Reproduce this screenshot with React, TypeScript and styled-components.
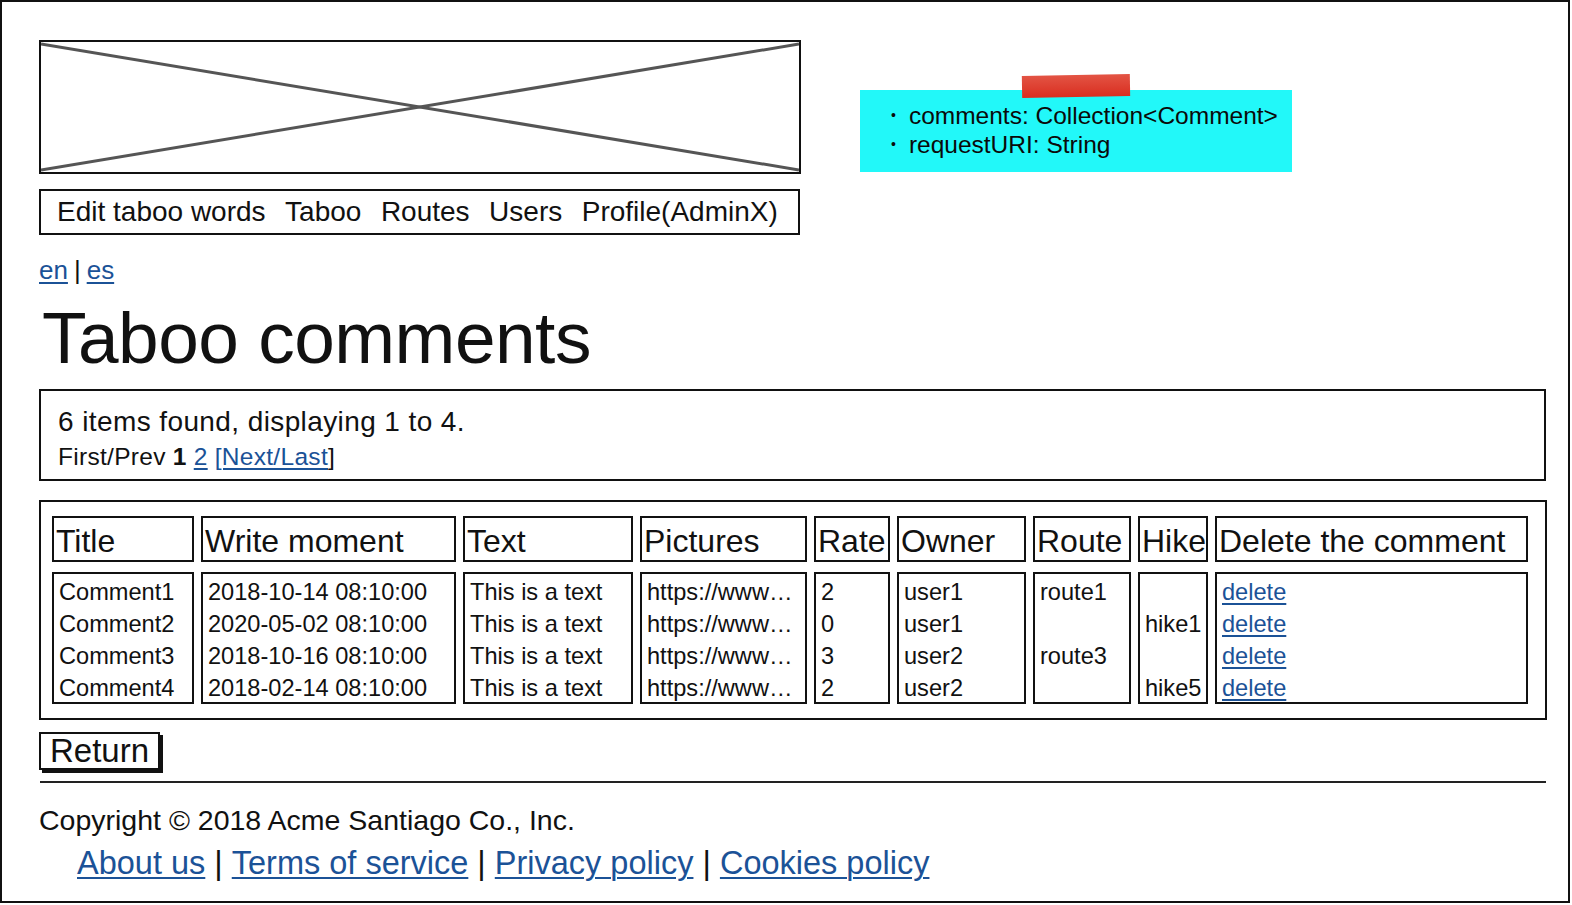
import React from 'react';
import styled, { createGlobalStyle } from 'styled-components';

const GlobalStyle = createGlobalStyle`
  html, body {
    margin: 0;
    padding: 0;
    background: #ffffff;
  }
  body {
    font-family: 'Liberation Sans', Arial, sans-serif;
    color: #111;
  }
`;

const LINK = '#1b5297';

const Frame = styled.div`
  box-sizing: border-box;
  width: 1570px;
  height: 903px;
  border: 2px solid #111;
  padding: 38px 0 0 37px;
  overflow: hidden;
`;

const TopRow = styled.div`
  display: flex;
  align-items: flex-start;
  gap: 59px;
`;

const Placeholder = styled.div`
  box-sizing: border-box;
  width: 762px;
  height: 134px;
  border: 2px solid #111;
  svg {
    display: block;
    width: 100%;
    height: 100%;
  }
`;

const Note = styled.div`
  position: relative;
  margin-top: 50px;
  width: 432px;
  height: 82px;
  background: #22f8f9;
  box-sizing: border-box;
  padding: 11px 0 0 31px;
  font-family: 'Liberation Sans', Arial, sans-serif;
  font-size: 24.5px;
  line-height: 29px;
  color: #0a0a0a;
`;

const Tape = styled.div`
  position: absolute;
  left: 162px;
  top: -15px;
  width: 108px;
  height: 22px;
  background: linear-gradient(#e35444, #d92e20);
  transform: rotate(-1deg);
`;

const NoteItem = styled.div`
  display: flex;
  gap: 13px;
  &::before {
    content: '•';
    font-size: 14px;
  }
`;

const NavBox = styled.nav`
  box-sizing: border-box;
  margin-top: 15px;
  width: 761px;
  height: 46px;
  border: 2px solid #111;
  display: flex;
  align-items: center;
  gap: 19.5px;
  padding-left: 16px;
  font-size: 28px;
`;

const Lang = styled.div`
  margin-top: 20px;
  font-size: 26px;
  display: flex;
  align-items: center;
  gap: 6px;
  height: 30px;
`;

const Link = styled.a`
  color: ${LINK};
  text-decoration: underline;
  text-decoration-thickness: 2px;
  text-underline-offset: 3px;
`;

const Title = styled.h1`
  margin: 12px 0 0 3px;
  font-size: 73px;
  font-weight: 400;
  line-height: 82px;
  letter-spacing: -0.5px;
`;

const InfoBox = styled.div`
  box-sizing: border-box;
  margin-top: 10px;
  width: 1507px;
  height: 92px;
  border: 2px solid #111;
  padding: 14px 0 0 17px;
`;

const Found = styled.div`
  font-size: 28px;
  line-height: 34px;
  letter-spacing: 0.4px;
`;

const Pager = styled.div`
  margin-top: 2px;
  font-size: 24.5px;
  line-height: 32px;
  display: flex;
  gap: 7px;
  letter-spacing: 0.3px;
  b {
    font-weight: 700;
  }
`;

const TableBox = styled.div`
  box-sizing: border-box;
  margin-top: 19px;
  width: 1508px;
  height: 220px;
  border: 2px solid #111;
  padding: 14px 0 0 11px;
  display: flex;
  gap: 7px;
`;

const Column = styled.div<{ w: number }>`
  width: ${({ w }) => w}px;
  display: flex;
  flex-direction: column;
  gap: 10px;
`;

const HeadCell = styled.div`
  box-sizing: border-box;
  height: 46px;
  border: 2px solid #111;
  padding: 0 2px;
  font-size: 32px;
  line-height: 46px;
  white-space: nowrap;
`;

const BodyCell = styled.div`
  box-sizing: border-box;
  height: 132px;
  border: 2px solid #111;
  padding: 2px 0 0 5px;
  font-size: 23.6px;
  line-height: 32px;
  white-space: nowrap;
  overflow: hidden;
`;

const Line = styled.div`
  height: 32px;
`;

const ReturnButton = styled.button`
  margin-top: 12px;
  box-sizing: border-box;
  height: 38px;
  padding: 0 9px;
  background: #fff;
  border: 2px solid #111;
  box-shadow: 3px 3px 0 #111;
  font-family: 'Liberation Sans', Arial, sans-serif;
  font-size: 33px;
  line-height: 32px;
  color: #111;
  display: block;
`;

const Rule = styled.hr`
  margin: 11px 0 0 1px;
  width: 1506px;
  border: none;
  border-top: 2px solid #222;
`;

const Copyright = styled.div`
  margin-top: 20px;
  font-size: 28.5px;
  line-height: 34px;
`;

const FooterLinks = styled.div`
  margin: 6px 0 0 38px;
  display: flex;
  gap: 9px;
  font-size: 32.5px;
  line-height: 40px;
`;

type Col = { title: string; w: number; rows: (string | null)[]; link?: boolean };

const columns: Col[] = [
  { title: 'Title', w: 142, rows: ['Comment1', 'Comment2', 'Comment3', 'Comment4'] },
  {
    title: 'Write moment',
    w: 255,
    rows: ['2018-10-14 08:10:00', '2020-05-02 08:10:00', '2018-10-16 08:10:00', '2018-02-14 08:10:00'],
  },
  { title: 'Text', w: 170, rows: ['This is a text', 'This is a text', 'This is a text', 'This is a text'] },
  { title: 'Pictures', w: 167, rows: ['https://www…', 'https://www…', 'https://www…', 'https://www…'] },
  { title: 'Rate', w: 76, rows: ['2', '0', '3', '2'] },
  { title: 'Owner', w: 129, rows: ['user1', 'user1', 'user2', 'user2'] },
  { title: 'Route', w: 98, rows: ['route1', null, 'route3', null] },
  { title: 'Hike', w: 70, rows: [null, 'hike1', null, 'hike5'] },
  { title: 'Delete the comment', w: 313, rows: ['delete', 'delete', 'delete', 'delete'], link: true },
];

export default function App() {
  return (
    <>
      <GlobalStyle />
      <Frame>
        <TopRow>
          <Placeholder>
            <svg viewBox="0 0 758 130" preserveAspectRatio="none">
              <line x1="0" y1="2" x2="758" y2="128" stroke="#555" strokeWidth="3" />
              <line x1="0" y1="128" x2="758" y2="2" stroke="#555" strokeWidth="3" />
            </svg>
          </Placeholder>
          <Note>
            <Tape />
            <NoteItem>comments: Collection&lt;Comment&gt;</NoteItem>
            <NoteItem>requestURI: String</NoteItem>
          </Note>
        </TopRow>

        <NavBox>
          <span>Edit taboo words</span>
          <span>Taboo</span>
          <span>Routes</span>
          <span>Users</span>
          <span>Profile(AdminX)</span>
        </NavBox>

        <Lang>
          <Link href="#">en</Link>
          <span>|</span>
          <Link href="#">es</Link>
        </Lang>

        <Title>Taboo comments</Title>

        <InfoBox>
          <Found>6 items found, displaying 1 to 4.</Found>
          <Pager>
            <span>First/Prev</span>
            <b>1</b>
            <Link href="#">2</Link>
            <span>
              <Link href="#">[Next/Last</Link>]
            </span>
          </Pager>
        </InfoBox>

        <TableBox>
          {columns.map((col) => (
            <Column key={col.title} w={col.w}>
              <HeadCell>{col.title}</HeadCell>
              <BodyCell>
                {col.rows.map((r, i) => (
                  <Line key={i}>{r && (col.link ? <Link href="#">{r}</Link> : r)}</Line>
                ))}
              </BodyCell>
            </Column>
          ))}
        </TableBox>

        <ReturnButton>Return</ReturnButton>
        <Rule />

        <Copyright>Copyright © 2018 Acme Santiago Co., Inc.</Copyright>
        <FooterLinks>
          <Link href="#">About us</Link>
          <span>|</span>
          <Link href="#">Terms of service</Link>
          <span>|</span>
          <Link href="#">Privacy policy</Link>
          <span>|</span>
          <Link href="#">Cookies policy</Link>
        </FooterLinks>
      </Frame>
    </>
  );
}
